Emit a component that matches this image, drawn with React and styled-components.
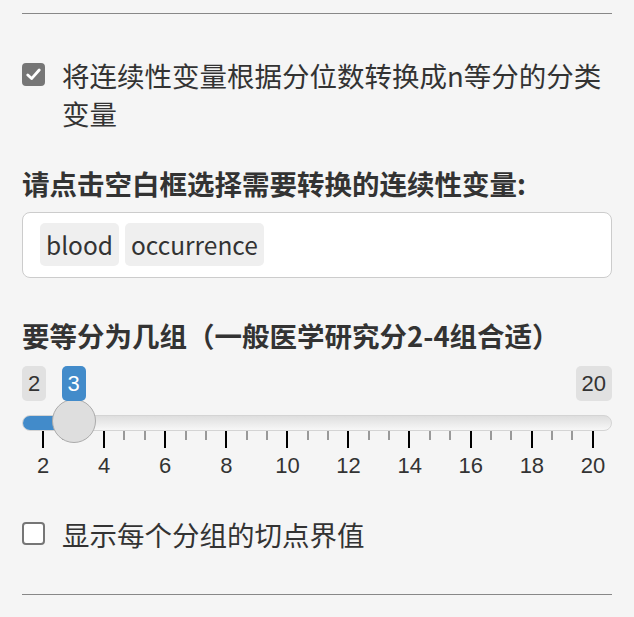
import React from 'react'
import styled, { createGlobalStyle } from 'styled-components'

const GlobalStyle = createGlobalStyle`
  html, body {
    margin: 0;
    padding: 0;
    background: #f5f5f5;
  }
  body {
    font-family: "Noto Sans CJK SC", "Noto Sans", sans-serif;
    color: #333;
  }
`

const MIN = 2
const MAX = 20
const VALUE = 3
const GRID_LEFT = 21
const GRID_WIDTH = 550

const Panel = styled.div`
  width: 590px;
  padding: 13px 22px 0;
`

const Rule = styled.hr`
  margin: ${props => props.top || 0}px 0 0;
  border: none;
  border-top: 1px solid #888;
`

const CheckRow = styled.label`
  display: flex;
  align-items: flex-start;
  gap: 17px;
  margin-top: ${props => props.top}px;
  font-size: 27.5px;
  line-height: 38px;
`

const Box = styled.span`
  flex: 0 0 auto;
  width: 23px;
  height: 23px;
  margin-top: 7px;
  box-sizing: border-box;
  border-radius: 4px;
  display: flex;
  align-items: center;
  justify-content: center;
  background: ${props => (props.checked ? '#767676' : '#fff')};
  border: 2px solid #767676;
`

const FieldLabel = styled.div`
  margin-top: ${props => props.top}px;
  font-size: 27.5px;
  font-weight: 700;
  line-height: 38px;
`

const SelectBox = styled.div`
  margin-top: 10px;
  height: 66px;
  box-sizing: border-box;
  border: 1px solid #ccc;
  border-radius: 8px;
  background: #fff;
  padding: 10px 17px;
  display: flex;
  gap: 6px;
`

const Chip = styled.span`
  background: #efefef;
  border-radius: 5px;
  padding: 0 6px;
  height: 43px;
  font-size: 24.5px;
  line-height: 43px;
`

const Slider = styled.div`
  position: relative;
  margin-top: 12px;
  display: flex;
  flex-direction: column;
  font-family: "Liberation Sans", Arial, sans-serif;
`

const BubbleRow = styled.div`
  display: flex;
  justify-content: space-between;
`

const Bubble = styled.span`
  height: 35px;
  padding: 0 6px;
  border-radius: 5px;
  font-size: 22px;
  line-height: 35px;
  background: ${props => (props.active ? '#428bca' : '#e1e1e1')};
  color: ${props => (props.active ? '#fff' : '#333')};
`

const ValueBubble = styled(Bubble)`
  position: absolute;
  top: 0;
`

const Track = styled.div`
  margin-top: 14px;
  height: 16px;
  box-sizing: border-box;
  border: 1px solid #d4d4d4;
  border-radius: 8px;
  background: linear-gradient(to bottom, #dedede, #f7f7f7);
  overflow: hidden;
`

const Bar = styled.div`
  height: 100%;
  margin: -1px 0 0 -1px;
  padding-bottom: 2px;
  background: #428bca;
`

const Handle = styled.div`
  position: absolute;
  top: 33px;
  width: 44px;
  height: 44px;
  box-sizing: border-box;
  border-radius: 50%;
  border: 1px solid #ababab;
  background: #dedede;
`

const Ticks = styled.div`
  display: flex;
  justify-content: space-between;
  align-items: flex-start;
  margin: 0 ${590 - GRID_LEFT - GRID_WIDTH - 1}px 0 ${GRID_LEFT - 1}px;
`

const Tick = styled.span`
  width: 2px;
  height: ${props => (props.major ? 17 : 9)}px;
  background: ${props => (props.major ? '#000' : '#999')};
`

const Numbers = styled.div`
  display: flex;
  justify-content: space-between;
  margin: 5px ${590 - GRID_LEFT - GRID_WIDTH - 20}px 0 ${GRID_LEFT - 20}px;
`

const Num = styled.span`
  width: 40px;
  text-align: center;
  font-size: 22px;
  line-height: 26px;
  color: #333;
`

const Check = () => (
  <svg width="15" height="13" viewBox="0 0 15 13">
    <path d="M1.8 7 L5.6 10.6 L13.2 2" fill="none" stroke="#fff" strokeWidth="2.8" strokeLinecap="round" strokeLinejoin="round" />
  </svg>
)

const pos = v => GRID_LEFT + ((v - MIN) / (MAX - MIN)) * GRID_WIDTH

const App = () => {
  const majors = []
  for (let v = MIN; v <= MAX; v += 2) majors.push(v)
  const ticks = []
  for (let i = 0; i <= (majors.length - 1) * 3; i++) ticks.push(i % 3 === 0)
  const handleX = pos(VALUE)

  return (
    <>
      <GlobalStyle />
      <Panel>
        <Rule />
        <CheckRow top={42}>
          <Box checked>
            <Check />
          </Box>
          <span>将连续性变量根据分位数转换成n等分的分类变量</span>
        </CheckRow>
        <FieldLabel top={32}>请点击空白框选择需要转换的连续性变量:</FieldLabel>
        <SelectBox>
          <Chip>blood</Chip>
          <Chip>occurrence</Chip>
        </SelectBox>
        <FieldLabel top={38}>要等分为几组（一般医学研究分2-4组合适）</FieldLabel>
        <Slider>
          <BubbleRow>
            <Bubble>{MIN}</Bubble>
            <Bubble>{MAX}</Bubble>
          </BubbleRow>
          <Track>
            <Bar style={{ width: handleX }} />
          </Track>
          <Ticks>
            {ticks.map((major, i) => (
              <Tick key={i} major={major} />
            ))}
          </Ticks>
          <Numbers>
            {majors.map(v => (
              <Num key={v}>{v}</Num>
            ))}
          </Numbers>
          <Handle style={{ left: handleX - 22 }} />
          <ValueBubble active style={{ left: handleX - 12 }}>
            {VALUE}
          </ValueBubble>
        </Slider>
        <CheckRow top={36}>
          <Box />
          <span>显示每个分组的切点界值</span>
        </CheckRow>
        <Rule top={41} />
      </Panel>
    </>
  )
}

export default App
